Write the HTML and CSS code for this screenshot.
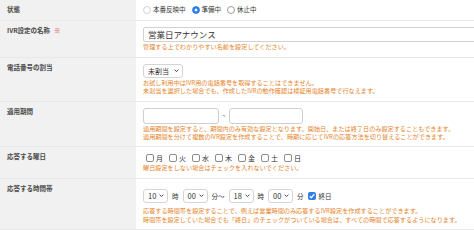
FILE: index.html
```html
<!DOCTYPE html>
<html lang="ja">
<head>
<meta charset="utf-8">
<title>IVR設定</title>
<link rel="stylesheet" href="styles.css">
</head>
<body>
<div class="form">
  <div class="row">
    <div class="th">状態</div>
    <div class="td td-first">
      <div class="choices">
        <label class="opt"><span class="rb rb-off"></span>本番反映中</label>
        <label class="opt"><span class="rb rb-on"></span>準備中</label>
        <label class="opt"><span class="rb"></span>休止中</label>
      </div>
    </div>
  </div>
  <div class="row">
    <div class="th">IVR設定の名称<span class="req">※</span></div>
    <div class="td">
      <div class="text">営業日アナウンス</div>
      <p class="note">管理する上でわかりやすい名前を設定してください。</p>
    </div>
  </div>
  <div class="row">
    <div class="th">電話番号の割当</div>
    <div class="td">
      <div class="sel sel-wide"><span>未割当</span><svg class="chev" viewBox="0 0 6 4" width="5" height="3.4"><path d="M0.7 0.7 3 3.1 5.3 0.7" fill="none" stroke="#3a3a3a" stroke-width="1.1"/></svg></div>
      <p class="note">お試し利用中はIVR用の電話番号を取得することはできません。</p>
      <p class="note">未割当を選択した場合でも、作成したIVRの動作確認は検証用電話番号で行なえます。</p>
    </div>
  </div>
  <div class="row">
    <div class="th">適用期間</div>
    <div class="td td-dates">
      <div class="dates">
        <span class="date"></span>
        <span class="tilde">~</span>
        <span class="date date-end"></span>
      </div>
      <p class="note">適用期間を設定すると、期間内のみ有効な設定となります。開始日、または終了日のみ設定することもできます。</p>
      <p class="note">適用期間を分けて複数のIVR設定を作成することで、時期に応じてIVRの応答方法を切り替えることができます。</p>
    </div>
  </div>
  <div class="row">
    <div class="th">応答する曜日</div>
    <div class="td td-days">
      <div class="days">
        <label class="day"><span class="cb"></span>月</label>
        <label class="day"><span class="cb"></span>火</label>
        <label class="day"><span class="cb"></span>水</label>
        <label class="day"><span class="cb"></span>木</label>
        <label class="day"><span class="cb"></span>金</label>
        <label class="day"><span class="cb"></span>土</label>
        <label class="day"><span class="cb"></span>日</label>
      </div>
      <p class="note">曜日設定をしない場合はチェックを入れないでください。</p>
    </div>
  </div>
  <div class="row">
    <div class="th">応答する時間帯</div>
    <div class="td td-times">
      <div class="times">
        <span class="sel sel-time"><span>10</span><svg class="chev" viewBox="0 0 6 4" width="5" height="3.4"><path d="M0.7 0.7 3 3.1 5.3 0.7" fill="none" stroke="#3a3a3a" stroke-width="1.1"/></svg></span>
        <span>時</span>
        <span class="sel sel-time"><span>00</span><svg class="chev" viewBox="0 0 6 4" width="5" height="3.4"><path d="M0.7 0.7 3 3.1 5.3 0.7" fill="none" stroke="#3a3a3a" stroke-width="1.1"/></svg></span>
        <span>分～</span>
        <span class="sel sel-time"><span>18</span><svg class="chev" viewBox="0 0 6 4" width="5" height="3.4"><path d="M0.7 0.7 3 3.1 5.3 0.7" fill="none" stroke="#3a3a3a" stroke-width="1.1"/></svg></span>
        <span>時</span>
        <span class="sel sel-time"><span>00</span><svg class="chev" viewBox="0 0 6 4" width="5" height="3.4"><path d="M0.7 0.7 3 3.1 5.3 0.7" fill="none" stroke="#3a3a3a" stroke-width="1.1"/></svg></span>
        <span>分</span>
        <label class="allday"><span class="cb cb-on"><svg viewBox="0 0 8 8" width="8" height="8"><path d="M1.8 4.2 3.3 5.7 6.3 2.2" fill="none" stroke="#fff" stroke-width="1.3"/></svg></span>終日</label>
      </div>
      <p class="note note-times">応答する時間帯を設定することで、例えば営業時間のみ応答するIVR設定を作成することができます。</p>
      <p class="note">時間帯を設定していた場合でも「終日」のチェックがついている場合は、すべての時間で応答するようになります。</p>
    </div>
  </div>
</div>
</body>
</html>
```

FILE: styles.css
```css
* { box-sizing: border-box; margin: 0; padding: 0; }
html, body { overflow: hidden; }
body {
  font-family: "Noto Sans CJK JP", "Noto Sans", sans-serif;
  font-size: 6px;
  line-height: 8.5px;
  color: #333;
  background: #fff;
}
.form { width: 482px; }
.row {
  display: grid;
  grid-template-columns: 136px 1fr;
  border-bottom: 1px solid #e8e8e8;
}
.th {
  background: #f1f1f1;
  padding: 5px 7px;
  font-size: 6.5px;
  line-height: 9px;
  font-weight: bold;
  color: #4a4a4a;
}
.req { color: #e04a3a; margin-left: 4px; }
.td { padding: 6px 0 5px 7px; min-width: 0; }
.td-first { padding: 5px 0 6px 7px; }
.note {
  color: #e5842a;
  font-size: 6.15px;
  line-height: 8.5px;
  margin-top: 1px;
  white-space: nowrap;
}
.note + .note { margin-top: 0; }

/* radios */
.choices { display: flex; align-items: center; gap: 6px; height: 9px; font-size: 6.5px; }
.opt { display: flex; align-items: center; gap: 2px; line-height: 9px; color: #333; }
.rb {
  width: 8px; height: 8px; border-radius: 50%;
  border: 1px solid #9c9c9c; background: #fff; flex: none;
}
.rb-off { border-color: #d4d4d4; }
.rb-on {
  border-color: #2f7de6;
  background: radial-gradient(circle, #fff 0 1.2px, #2f7de6 1.7px);
}

/* text input */
.text {
  width: 100%; height: 15px;
  border: 1px solid #d2d2d2; border-radius: 2px;
  padding: 0 4px;
  font-size: 8.5px; line-height: 13px; color: #333;
}

/* select */
.sel {
  display: flex; align-items: center; justify-content: space-between;
  height: 14px; border: 1px solid #d4d4d4; border-radius: 3px;
  background: #fff; padding: 0 3px 0 4px;
  font-size: 7px; line-height: 12px; color: #333;
}
.sel-wide { width: 40px; }
.sel-time { width: 25px; font-size: 7.5px; flex: none; }
.chev { display: block; flex: none; }

/* dates */
.td-dates { padding-bottom: 4px; }
.dates { display: flex; align-items: center; gap: 3px; height: 16px; }
.date { width: 76px; height: 16px; border: 1px solid #cfcfcf; border-radius: 3px; background: #fff; }
.date-end { width: 74px; }
.tilde { width: 4px; font-size: 6px; line-height: 8px; color: #555; text-align: center; }

/* days */
.td-days { padding-bottom: 6px; }
.days { display: flex; align-items: center; height: 10px; font-size: 7px; line-height: 10px; }
.day { display: flex; align-items: center; margin-right: 3px; }
.cb {
  width: 8px; height: 8px; border: 1px solid #8c8c8c; border-radius: 2px;
  background: #fff; margin: 0 2px 0 3px; flex: none;
}

/* times */
.td-times { padding-top: 10px; }
.times { display: flex; align-items: center; gap: 4px; height: 14px; font-size: 6.5px; line-height: 9px; }
.allday { display: flex; align-items: center; gap: 3px; }
.cb-on { margin: 0; border: none; background: #2f7de6; display: block; }
.cb-on svg { display: block; }
.note-times { margin-top: 4px; }
```
